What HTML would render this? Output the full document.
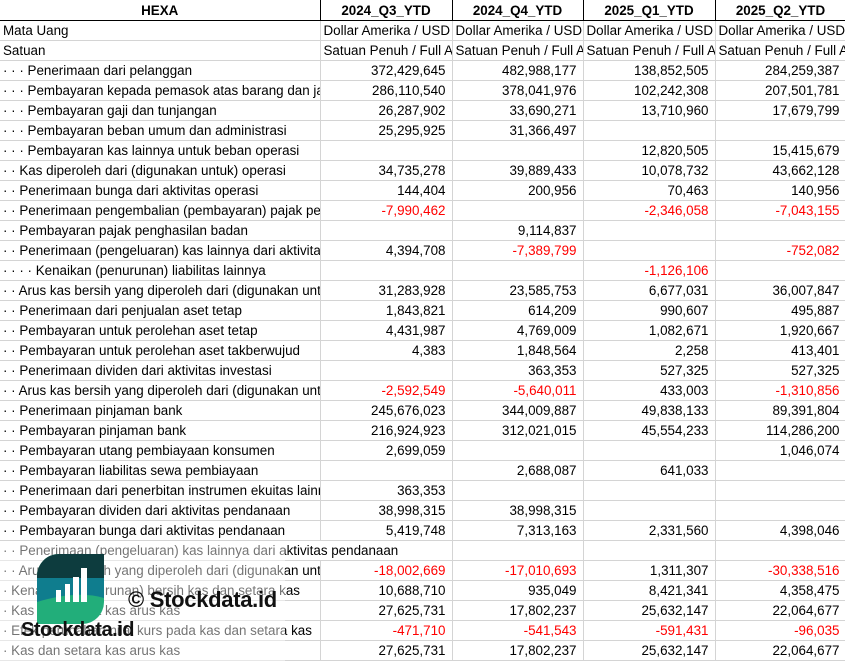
<!DOCTYPE html>
<html><head><meta charset="utf-8"><style>
body{margin:0;width:845px;height:661px;overflow:hidden;background:#fff;font-family:"Liberation Sans",Arial,sans-serif;font-size:13.4px;color:#000;position:relative}
table{border-collapse:collapse;table-layout:fixed;position:absolute;left:0;top:0;width:846px}
td,th{height:19px;padding:0 3px;border:1px solid #d4d4d4;white-space:nowrap;overflow:hidden;text-overflow:clip;line-height:19px}
th{height:20px;font-weight:bold;text-align:center;border:1px solid #000;border-top:none;border-left:none}
td.n{text-align:right;padding-right:6px}
.r{color:#f00}
tr td:first-child{border-left:none}
</style></head><body>
<table>
<colgroup><col style="width:320px"><col style="width:132px"><col style="width:131px"><col style="width:132px"><col style="width:131px"></colgroup>
<tr><th>HEXA</th><th>2024_Q3_YTD</th><th>2024_Q4_YTD</th><th>2025_Q1_YTD</th><th>2025_Q2_YTD</th></tr>
<tr><td>Mata Uang</td><td>Dollar Amerika / USD</td><td>Dollar Amerika / USD</td><td>Dollar Amerika / USD</td><td>Dollar Amerika / USD</td></tr>
<tr><td>Satuan</td><td>Satuan Penuh / Full Amount</td><td>Satuan Penuh / Full Amount</td><td>Satuan Penuh / Full Amount</td><td>Satuan Penuh / Full Amount</td></tr>
<tr><td>· · · Penerimaan dari pelanggan</td><td class="n">372,429,645</td><td class="n">482,988,177</td><td class="n">138,852,505</td><td class="n">284,259,387</td></tr>
<tr><td>· · · Pembayaran kepada pemasok atas barang dan jasa</td><td class="n">286,110,540</td><td class="n">378,041,976</td><td class="n">102,242,308</td><td class="n">207,501,781</td></tr>
<tr><td>· · · Pembayaran gaji dan tunjangan</td><td class="n">26,287,902</td><td class="n">33,690,271</td><td class="n">13,710,960</td><td class="n">17,679,799</td></tr>
<tr><td>· · · Pembayaran beban umum dan administrasi</td><td class="n">25,295,925</td><td class="n">31,366,497</td><td></td><td></td></tr>
<tr><td>· · · Pembayaran kas lainnya untuk beban operasi</td><td></td><td></td><td class="n">12,820,505</td><td class="n">15,415,679</td></tr>
<tr><td>· · Kas diperoleh dari (digunakan untuk) operasi</td><td class="n">34,735,278</td><td class="n">39,889,433</td><td class="n">10,078,732</td><td class="n">43,662,128</td></tr>
<tr><td>· · Penerimaan bunga dari aktivitas operasi</td><td class="n">144,404</td><td class="n">200,956</td><td class="n">70,463</td><td class="n">140,956</td></tr>
<tr><td>· · Penerimaan pengembalian (pembayaran) pajak penghasilan</td><td class="n r">-7,990,462</td><td></td><td class="n r">-2,346,058</td><td class="n r">-7,043,155</td></tr>
<tr><td>· · Pembayaran pajak penghasilan badan</td><td></td><td class="n">9,114,837</td><td></td><td></td></tr>
<tr><td>· · Penerimaan (pengeluaran) kas lainnya dari aktivitas</td><td class="n">4,394,708</td><td class="n r">-7,389,799</td><td></td><td class="n r">-752,082</td></tr>
<tr><td>· · · · Kenaikan (penurunan) liabilitas lainnya</td><td></td><td></td><td class="n r">-1,126,106</td><td></td></tr>
<tr><td>· · Arus kas bersih yang diperoleh dari (digunakan untuk)</td><td class="n">31,283,928</td><td class="n">23,585,753</td><td class="n">6,677,031</td><td class="n">36,007,847</td></tr>
<tr><td>· · Penerimaan dari penjualan aset tetap</td><td class="n">1,843,821</td><td class="n">614,209</td><td class="n">990,607</td><td class="n">495,887</td></tr>
<tr><td>· · Pembayaran untuk perolehan aset tetap</td><td class="n">4,431,987</td><td class="n">4,769,009</td><td class="n">1,082,671</td><td class="n">1,920,667</td></tr>
<tr><td>· · Pembayaran untuk perolehan aset takberwujud</td><td class="n">4,383</td><td class="n">1,848,564</td><td class="n">2,258</td><td class="n">413,401</td></tr>
<tr><td>· · Penerimaan dividen dari aktivitas investasi</td><td></td><td class="n">363,353</td><td class="n">527,325</td><td class="n">527,325</td></tr>
<tr><td>· · Arus kas bersih yang diperoleh dari (digunakan untuk)</td><td class="n r">-2,592,549</td><td class="n r">-5,640,011</td><td class="n">433,003</td><td class="n r">-1,310,856</td></tr>
<tr><td>· · Penerimaan pinjaman bank</td><td class="n">245,676,023</td><td class="n">344,009,887</td><td class="n">49,838,133</td><td class="n">89,391,804</td></tr>
<tr><td>· · Pembayaran pinjaman bank</td><td class="n">216,924,923</td><td class="n">312,021,015</td><td class="n">45,554,233</td><td class="n">114,286,200</td></tr>
<tr><td>· · Pembayaran utang pembiayaan konsumen</td><td class="n">2,699,059</td><td></td><td></td><td class="n">1,046,074</td></tr>
<tr><td>· · Pembayaran liabilitas sewa pembiayaan</td><td></td><td class="n">2,688,087</td><td class="n">641,033</td><td></td></tr>
<tr><td>· · Penerimaan dari penerbitan instrumen ekuitas lainnya</td><td class="n">363,353</td><td></td><td></td><td></td></tr>
<tr><td>· · Pembayaran dividen dari aktivitas pendanaan</td><td class="n">38,998,315</td><td class="n">38,998,315</td><td></td><td></td></tr>
<tr><td>· · Pembayaran bunga dari aktivitas pendanaan</td><td class="n">5,419,748</td><td class="n">7,313,163</td><td class="n">2,331,560</td><td class="n">4,398,046</td></tr>
<tr><td colspan="2">· · Penerimaan (pengeluaran) kas lainnya dari aktivitas pendanaan</td><td></td><td></td><td></td></tr>
<tr><td>· · Arus kas bersih yang diperoleh dari (digunakan untuk)</td><td class="n r">-18,002,669</td><td class="n r">-17,010,693</td><td class="n">1,311,307</td><td class="n r">-30,338,516</td></tr>
<tr><td>· Kenaikan (penurunan) bersih kas dan setara kas</td><td class="n">10,688,710</td><td class="n">935,049</td><td class="n">8,421,341</td><td class="n">4,358,475</td></tr>
<tr><td>· Kas dan setara kas arus kas</td><td class="n">27,625,731</td><td class="n">17,802,237</td><td class="n">25,632,147</td><td class="n">22,064,677</td></tr>
<tr><td>· Efek perubahan nilai kurs pada kas dan setara kas</td><td class="n r">-471,710</td><td class="n r">-541,543</td><td class="n r">-591,431</td><td class="n r">-96,035</td></tr>
<tr><td>· Kas dan setara kas arus kas</td><td class="n">27,625,731</td><td class="n">17,802,237</td><td class="n">25,632,147</td><td class="n">22,064,677</td></tr>
</table>
<div style="position:absolute;left:0;top:541px;width:285px;height:120px;background:rgba(255,255,255,0.45)"></div>
<svg style="position:absolute;left:37px;top:554px" width="67" height="70" viewBox="0 0 67 70">
<defs><clipPath id="c"><path d="M22 0H67V48A22 22 0 0 1 45 70H0V22A22 22 0 0 1 22 0Z"/></clipPath></defs>
<g clip-path="url(#c)">
<rect width="67" height="70" fill="#22ae7a"/>
<path d="M0 22V26H67V0H0Z" fill="#0d3c3e"/>
<path d="M0 24H67V44Q40 36 0 48Z" fill="#0f7d8e"/>
</g>
<rect x="19" y="36" width="5" height="12" fill="#fff"/>
<rect x="28" y="30" width="5" height="18" fill="#fff"/>
<rect x="36" y="23" width="6" height="25" fill="#fff"/>
<rect x="44" y="14" width="6" height="34" fill="#fff"/>
</svg>
<div style="position:absolute;left:21px;top:619px;font-weight:bold;font-size:20px;color:#111;letter-spacing:-0.5px">Stockdata.id</div>
<div style="position:absolute;left:128px;top:587px;font-weight:bold;font-size:22px;color:#111;letter-spacing:-0.3px">© Stockdata.id</div>
</body></html>
